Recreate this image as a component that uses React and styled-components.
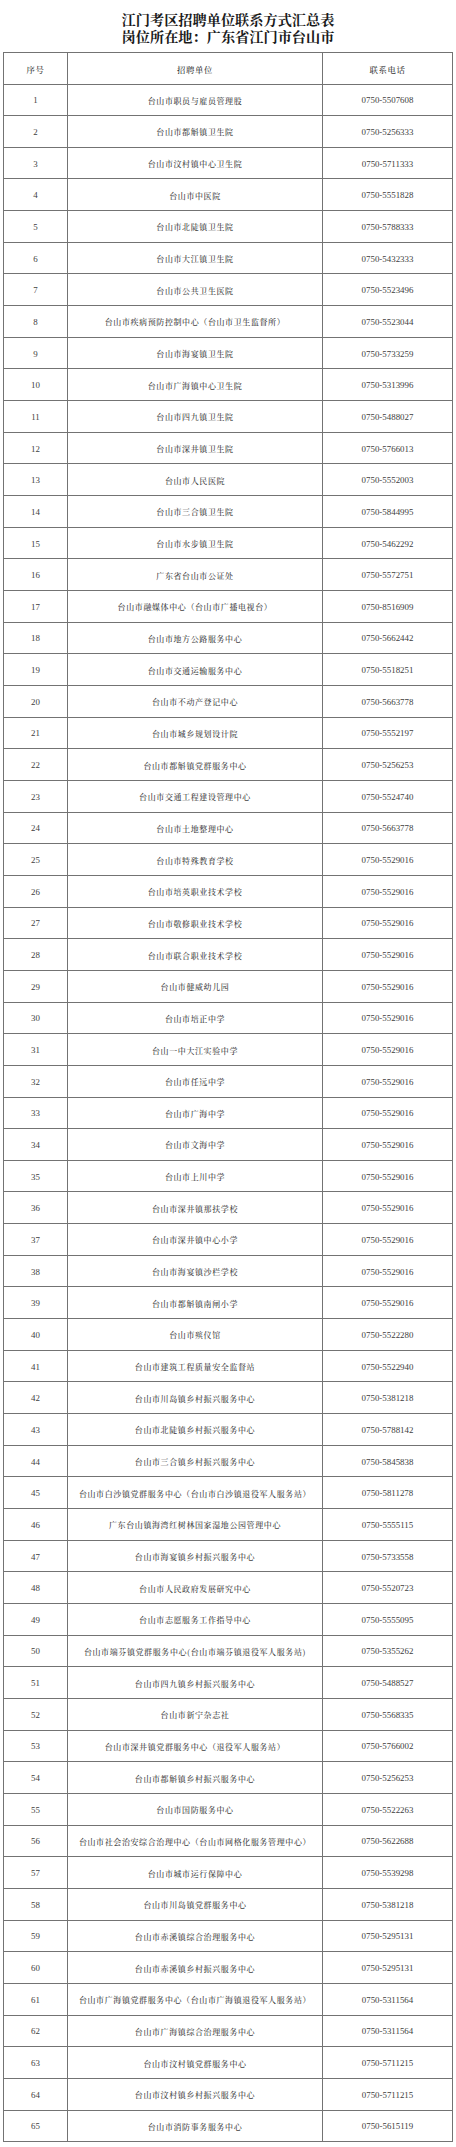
import styled, { createGlobalStyle } from "styled-components";

const rows = [
  ["1", "台山市职员与雇员管理股", "0750-5507608"],
  ["2", "台山市都斛镇卫生院", "0750-5256333"],
  ["3", "台山市汶村镇中心卫生院", "0750-5711333"],
  ["4", "台山市中医院", "0750-5551828"],
  ["5", "台山市北陡镇卫生院", "0750-5788333"],
  ["6", "台山市大江镇卫生院", "0750-5432333"],
  ["7", "台山市公共卫生医院", "0750-5523496"],
  ["8", "台山市疾病预防控制中心（台山市卫生监督所）", "0750-5523044"],
  ["9", "台山市海宴镇卫生院", "0750-5733259"],
  ["10", "台山市广海镇中心卫生院", "0750-5313996"],
  ["11", "台山市四九镇卫生院", "0750-5488027"],
  ["12", "台山市深井镇卫生院", "0750-5766013"],
  ["13", "台山市人民医院", "0750-5552003"],
  ["14", "台山市三合镇卫生院", "0750-5844995"],
  ["15", "台山市水步镇卫生院", "0750-5462292"],
  ["16", "广东省台山市公证处", "0750-5572751"],
  ["17", "台山市融媒体中心（台山市广播电视台）", "0750-8516909"],
  ["18", "台山市地方公路服务中心", "0750-5662442"],
  ["19", "台山市交通运输服务中心", "0750-5518251"],
  ["20", "台山市不动产登记中心", "0750-5663778"],
  ["21", "台山市城乡规划设计院", "0750-5552197"],
  ["22", "台山市都斛镇党群服务中心", "0750-5256253"],
  ["23", "台山市交通工程建设管理中心", "0750-5524740"],
  ["24", "台山市土地整理中心", "0750-5663778"],
  ["25", "台山市特殊教育学校", "0750-5529016"],
  ["26", "台山市培英职业技术学校", "0750-5529016"],
  ["27", "台山市敬修职业技术学校", "0750-5529016"],
  ["28", "台山市联合职业技术学校", "0750-5529016"],
  ["29", "台山市健威幼儿园", "0750-5529016"],
  ["30", "台山市培正中学", "0750-5529016"],
  ["31", "台山一中大江实验中学", "0750-5529016"],
  ["32", "台山市任远中学", "0750-5529016"],
  ["33", "台山市广海中学", "0750-5529016"],
  ["34", "台山市文海中学", "0750-5529016"],
  ["35", "台山市上川中学", "0750-5529016"],
  ["36", "台山市深井镇那扶学校", "0750-5529016"],
  ["37", "台山市深井镇中心小学", "0750-5529016"],
  ["38", "台山市海宴镇沙栏学校", "0750-5529016"],
  ["39", "台山市都斛镇南闸小学", "0750-5529016"],
  ["40", "台山市殡仪馆", "0750-5522280"],
  ["41", "台山市建筑工程质量安全监督站", "0750-5522940"],
  ["42", "台山市川岛镇乡村振兴服务中心", "0750-5381218"],
  ["43", "台山市北陡镇乡村振兴服务中心", "0750-5788142"],
  ["44", "台山市三合镇乡村振兴服务中心", "0750-5845838"],
  ["45", "台山市白沙镇党群服务中心（台山市白沙镇退役军人服务站）", "0750-5811278"],
  ["46", "广东台山镇海湾红树林国家湿地公园管理中心", "0750-5555115"],
  ["47", "台山市海宴镇乡村振兴服务中心", "0750-5733558"],
  ["48", "台山市人民政府发展研究中心", "0750-5520723"],
  ["49", "台山市志愿服务工作指导中心", "0750-5555095"],
  ["50", "台山市端芬镇党群服务中心(台山市端芬镇退役军人服务站)", "0750-5355262"],
  ["51", "台山市四九镇乡村振兴服务中心", "0750-5488527"],
  ["52", "台山市新宁杂志社", "0750-5568335"],
  ["53", "台山市深井镇党群服务中心（退役军人服务站）", "0750-5766002"],
  ["54", "台山市都斛镇乡村振兴服务中心", "0750-5256253"],
  ["55", "台山市国防服务中心", "0750-5522263"],
  ["56", "台山市社会治安综合治理中心（台山市网格化服务管理中心）", "0750-5622688"],
  ["57", "台山市城市运行保障中心", "0750-5539298"],
  ["58", "台山市川岛镇党群服务中心", "0750-5381218"],
  ["59", "台山市赤溪镇综合治理服务中心", "0750-5295131"],
  ["60", "台山市赤溪镇乡村振兴服务中心", "0750-5295131"],
  ["61", "台山市广海镇党群服务中心（台山市广海镇退役军人服务站）", "0750-5311564"],
  ["62", "台山市广海镇综合治理服务中心", "0750-5311564"],
  ["63", "台山市汶村镇党群服务中心", "0750-5711215"],
  ["64", "台山市汶村镇乡村振兴服务中心", "0750-5711215"],
  ["65", "台山市消防事务服务中心", "0750-5615119"],
];

export default function App() {
  return (
    <>
      <GlobalStyle />
      <Page>
        <Title>
          <div>江门考区招聘单位联系方式汇总表</div>
          <div>岗位所在地：广东省江门市台山市</div>
        </Title>
        <Table>
          <Row $head>
            <Cell $head>序号</Cell>
            <Cell $head>招聘单位</Cell>
            <Cell $head>联系电话</Cell>
          </Row>
          {rows.map(([no, unit, phone]) => (
            <Row key={no}>
              <Cell $num>{no}</Cell>
              <Cell>{unit}</Cell>
              <Cell $num>{phone}</Cell>
            </Row>
          ))}
        </Table>
      </Page>
    </>
  );
}

const GlobalStyle = createGlobalStyle`
  html, body {
    margin: 0;
    padding: 0;
    background: #fff;
  }
`;

const Page = styled.div`
  width: 456px;
  height: 2147px;
  box-sizing: border-box;
  padding: 11px 0 0 3px;
  background: #fff;
  overflow: hidden;
`;

const Title = styled.div`
  width: 450px;
  text-align: center;
  font-family: "Noto Serif CJK SC", "Liberation Serif", "Noto Sans CJK SC", serif;
  font-weight: 700;
  font-size: 14.2px;
  line-height: 16.5px;
  color: #1a1a1a;
  margin-bottom: 8px;
`;

const Table = styled.div`
  width: 450px;
  box-sizing: border-box;
  border-left: 1px solid #737373;
  border-top: 1px solid #737373;
`;

const Row = styled.div`
  display: grid;
  grid-template-columns: 64px 255px 1fr;
  height: ${(p) => (p.$head ? "31.5px" : "31.67px")};
`;

const Cell = styled.div`
  box-sizing: border-box;
  display: flex;
  align-items: center;
  justify-content: center;
  border-right: 1px solid #737373;
  border-bottom: 1px solid #737373;
  white-space: nowrap;
  color: ${(p) => (p.$head ? "#333" : "#404040")};
  font-family: ${(p) =>
    p.$num
      ? '"Liberation Serif", serif'
      : '"Noto Serif CJK SC", "Liberation Serif", "Noto Sans CJK SC", serif'};
  font-size: ${(p) => (p.$num ? "8.9px" : p.$head ? "8.4px" : "8px")};
  font-weight: ${(p) => (p.$num ? 400 : 500)};
  letter-spacing: ${(p) => (p.$num ? "0" : "0.6px")};
  padding-top: 1px;
`;
